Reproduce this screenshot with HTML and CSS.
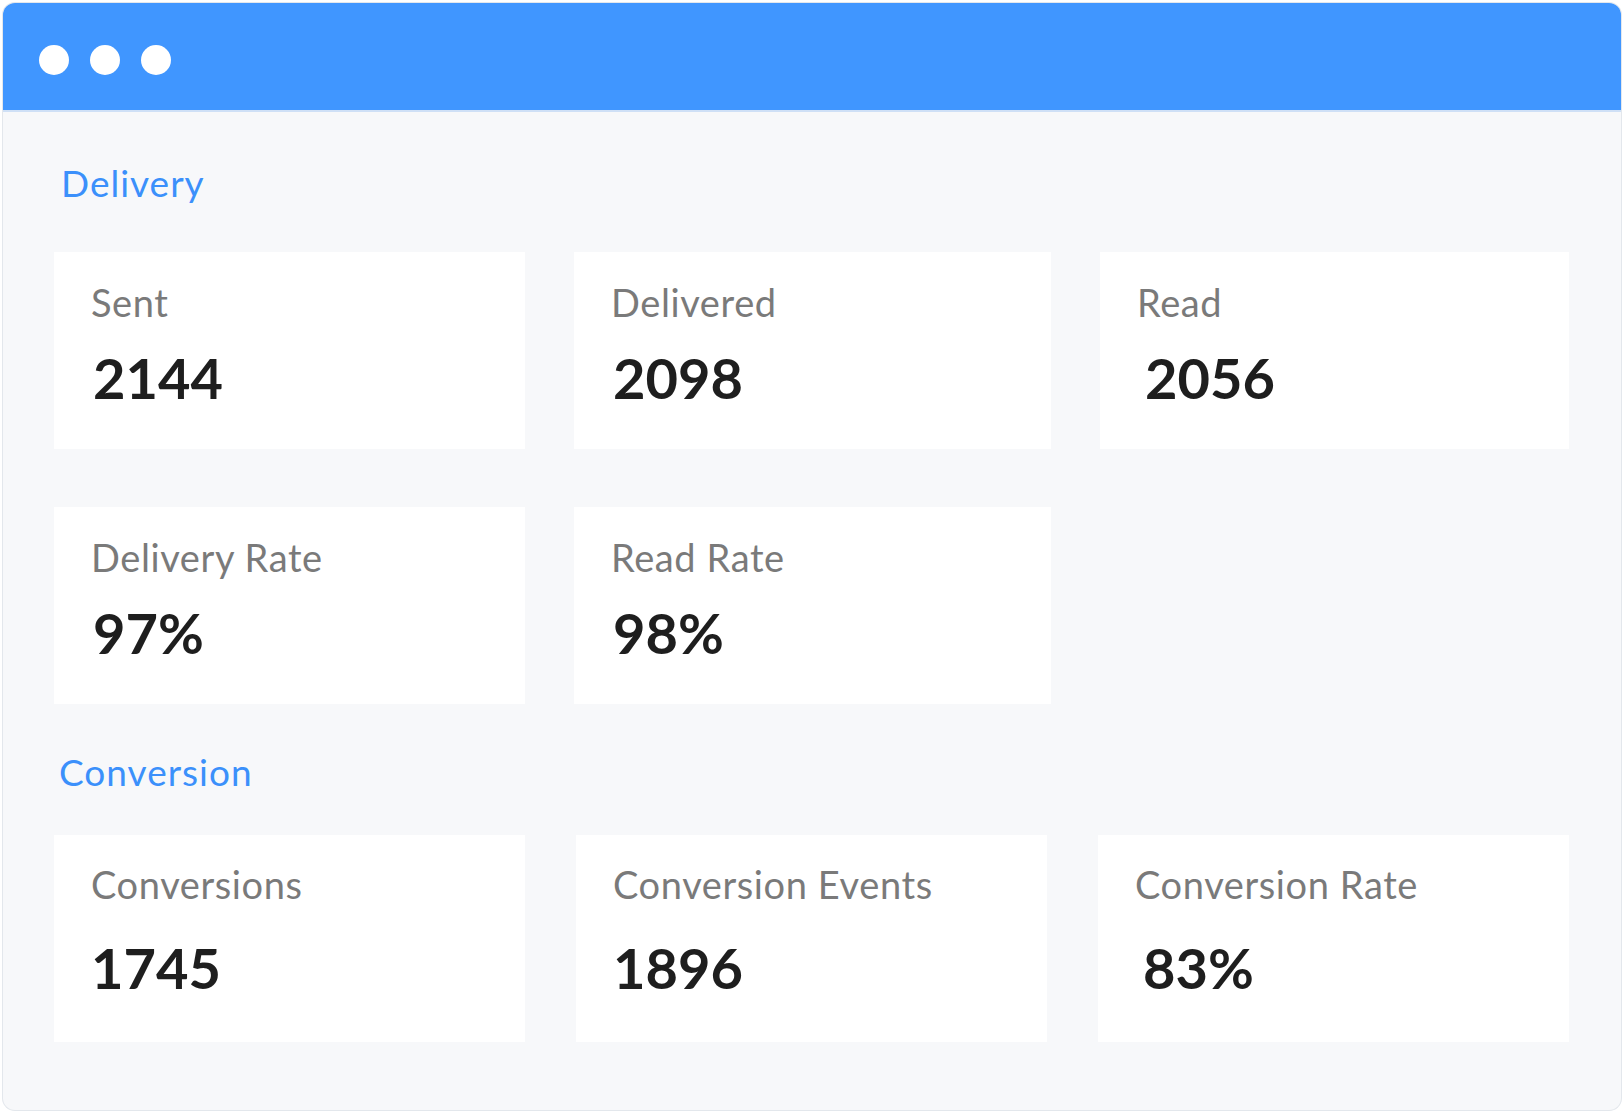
FILE: index.html
```html
<!DOCTYPE html>
<html lang="en">

<head>
    <meta charset="UTF-8">
    <title>Campaign Stats</title>
    <link rel="stylesheet" href="styles.css">
</head>

<body>

    <div class="window">
        <div class="titlebar">
            <span class="dot"></span>
            <span class="dot"></span>
            <span class="dot"></span>
        </div>

        <div class="content">
            <section class="section">
                <h2 class="section-title">Delivery</h2>
                <div class="stats stats-delivery">
                    <div class="stat-card">
                        <div class="stat-label">Sent</div>
                        <div class="stat-value">2144</div>
                    </div>
                    <div class="stat-card">
                        <div class="stat-label">Delivered</div>
                        <div class="stat-value">2098</div>
                    </div>
                    <div class="stat-card">
                        <div class="stat-label">Read</div>
                        <div class="stat-value indent">2056</div>
                    </div>
                    <div class="stat-card">
                        <div class="stat-label">Delivery Rate</div>
                        <div class="stat-value">97%</div>
                    </div>
                    <div class="stat-card">
                        <div class="stat-label">Read Rate</div>
                        <div class="stat-value">98%</div>
                    </div>
                </div>
            </section>

            <section class="section section-conversion">
                <h2 class="section-title">Conversion</h2>
                <div class="stats stats-roomy">
                    <div class="stat-card">
                        <div class="stat-label">Conversions</div>
                        <div class="stat-value">1745</div>
                    </div>
                    <div class="stat-card">
                        <div class="stat-label">Conversion Events</div>
                        <div class="stat-value">1896</div>
                    </div>
                    <div class="stat-card">
                        <div class="stat-label">Conversion Rate</div>
                        <div class="stat-value indent">83%</div>
                    </div>
                </div>
            </section>
        </div>
    </div>

</body>

</html>
```

FILE: styles.css
```css
* {
    box-sizing: border-box;
}

body {
    margin: 0;
    font-family: Lato, 'Open Sans', sans-serif;
    background: #ffffff;
    height: 100vh;
    padding: 3px 1px 1px 3px;
}

.window {
    height: 100%;
    background: #f7f8fa;
    border-radius: 12px;
    box-shadow: 0 0 0 1px #e3e7ec;
    overflow: hidden;
    display: flex;
    flex-direction: column;
}

.titlebar {
    height: 109px;
    flex-shrink: 0;
    background: #4096ff;
    border-bottom: 2px solid #cfe0f6;
    display: flex;
    align-items: flex-start;
    gap: 21px;
    padding: 42px 36px 0;
}

.dot {
    width: 30px;
    height: 30px;
    border-radius: 50%;
    background: #ffffff;
}

.content {
    padding: 49px 52px 0 51px;
}

.section-title {
    margin: 0 0 47px 7px;
    font-size: 37px;
    font-weight: 400;
    line-height: 1.2;
    color: #3b90fb;
    letter-spacing: 1px;
}

.section-conversion {
    margin-top: 46px;
}

.section-conversion .section-title {
    margin-left: 5px;
    margin-bottom: 41px;
}

.stats {
    display: grid;
    grid-template-columns: repeat(3, 1fr);
    column-gap: 51px;
    row-gap: 58px;
}

/* middle column runs a little wider in the delivery block */
.stats-delivery {
    grid-template-columns: 471px 477px 1fr;
    column-gap: 49px;
}

.stat-card {
    background: #ffffff;
    padding: 28px 37px 38px;
}

.stat-label {
    font-size: 38px;
    line-height: 1.2;
    color: #7a7a7a;
    letter-spacing: 0.6px;
}

.stat-value {
    margin-top: 18px;
    font-size: 56px;
    font-weight: 700;
    line-height: 1.2;
    color: #1e1e1e;
    padding-left: 2px;
}

.stat-value.indent {
    padding-left: 8px;
}

.stats-roomy .stat-card {
    padding-top: 27px;
    padding-bottom: 41px;
}

.stats-roomy .stat-value {
    margin-top: 26px;
    padding-left: 0;
}

.stats-roomy .stat-value.indent {
    padding-left: 8px;
}
```
